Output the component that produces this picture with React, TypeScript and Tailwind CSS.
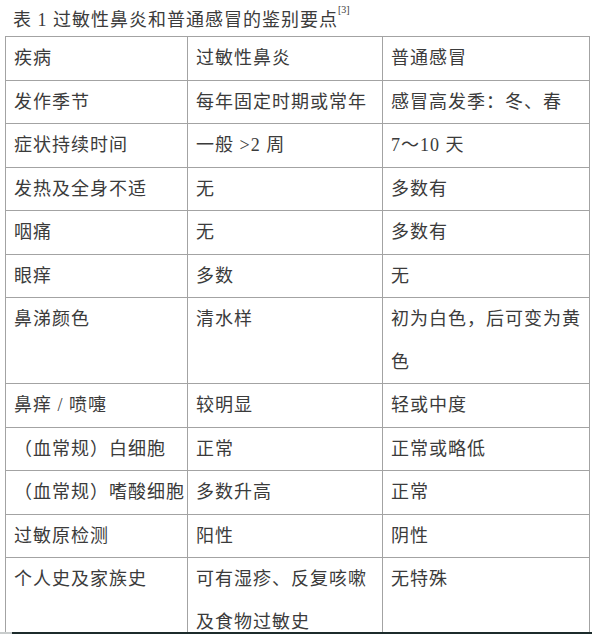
const ROWS: string[][] = [
  ["疾病", "过敏性鼻炎", "普通感冒"],
  ["发作季节", "每年固定时期或常年", "感冒高发季：冬、春"],
  ["症状持续时间", "一般 >2 周", "7～10 天"],
  ["发热及全身不适", "无", "多数有"],
  ["咽痛", "无", "多数有"],
  ["眼痒", "多数", "无"],
  ["鼻涕颜色", "清水样", "初为白色，后可变为黄\n色"],
  ["鼻痒 / 喷嚏", "较明显", "轻或中度"],
  ["（血常规）白细胞", "正常", "正常或略低"],
  ["（血常规）嗜酸细胞", "多数升高", "正常"],
  ["过敏原检测", "阳性", "阴性"],
  ["个人史及家族史", "可有湿疹、反复咳嗽\n及食物过敏史", "无特殊"],
];

function Cell({ text }: { text: string }) {
  const lines = text.split("\n");
  return (
    <td className="border border-[#a3a3a3] px-[8px] py-0 align-top leading-[42.5px] whitespace-nowrap">
      {lines.map((l, i) => (
        <div key={i}>{l}</div>
      ))}
    </td>
  );
}

export default function App() {
  return (
    <div
      className="flex h-[634px] w-[592px] flex-col overflow-hidden bg-white text-[18px] tracking-[1px] text-[#3b3b3b]"
      style={{ fontFamily: '"Liberation Serif", "Noto Sans CJK SC", serif' }}
    >
      <div className="h-[632px] overflow-hidden">
        <div className="flex h-[36px] items-center pl-[13px] pt-[3px] leading-none">
          <span>表 1 过敏性鼻炎和普通感冒的鉴别要点</span>
          <sup className="-mt-[10px] text-[10px] tracking-normal">[3]</sup>
        </div>
        <table className="ml-[5px] w-[584px] table-fixed border-collapse">
          <colgroup>
            <col className="w-[182px]" />
            <col className="w-[195px]" />
            <col className="w-[207px]" />
          </colgroup>
          <tbody>
            {ROWS.map((r, i) => (
              <tr key={i}>
                {r.map((c, j) => (
                  <Cell key={j} text={c} />
                ))}
              </tr>
            ))}
          </tbody>
        </table>
      </div>
      <div className="flex h-[2px]">
        <div className="w-[12px] bg-[#c8cccc]" />
        <div className="flex-1 bg-[#1c2b2b]" />
      </div>
    </div>
  );
}
